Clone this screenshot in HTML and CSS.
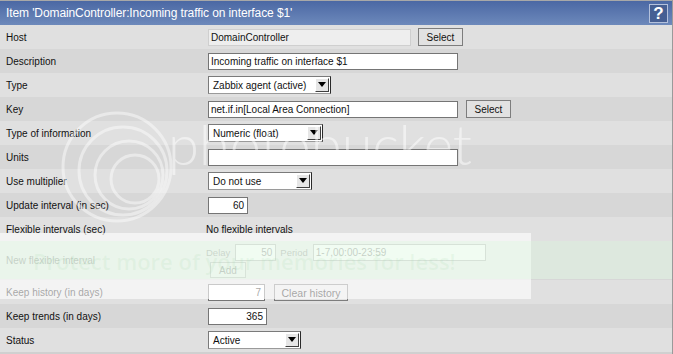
FILE: index.html
```html
<!DOCTYPE html>
<html>
<head>
<meta charset="utf-8">
<link rel="stylesheet" href="styles.css">
</head>
<body>
<div class="page">
  <div class="header">
    <span class="title">Item 'DomainController:Incoming traffic on interface $1'</span>
    <span class="help">?</span>
  </div>
  <div class="form">
    <div class="row light">
      <div class="label">Host</div>
      <div class="value">
        <span class="input readonly w-host">DomainController</span>
        <span class="btn b-select1">Select</span>
      </div>
    </div>
    <div class="row dark">
      <div class="label">Description</div>
      <div class="value"><span class="input w-wide">Incoming traffic on interface $1</span></div>
    </div>
    <div class="row light">
      <div class="label">Type</div>
      <div class="value"><span class="select w-type"><span class="sel-text">Zabbix agent (active)</span><span class="arrow"></span></span></div>
    </div>
    <div class="row dark">
      <div class="label">Key</div>
      <div class="value">
        <span class="input w-wide">net.if.in[Local Area Connection]</span>
        <span class="btn b-select2">Select</span>
      </div>
    </div>
    <div class="row light">
      <div class="label">Type of information</div>
      <div class="value"><span class="select w-info"><span class="sel-text">Numeric (float)</span><span class="arrow"></span></span></div>
    </div>
    <div class="row dark">
      <div class="label">Units</div>
      <div class="value"><span class="input w-wide"></span></div>
    </div>
    <div class="row light">
      <div class="label">Use multiplier</div>
      <div class="value"><span class="select w-mult"><span class="sel-text">Do not use</span><span class="arrow"></span></span></div>
    </div>
    <div class="row dark">
      <div class="label">Update interval (in sec)</div>
      <div class="value"><span class="input num w-upd">60</span></div>
    </div>
    <div class="row light">
      <div class="label">Flexible intervals (sec)</div>
      <div class="value text">No flexible intervals</div>
    </div>
    <div class="row dark tall">
      <div class="label">New flexible interval</div>
      <div class="value stack">
        <div class="flex-line">
          <span class="small">Delay</span>
          <span class="input num w-delay">50</span>
          <span class="small">Period</span>
          <span class="input w-period">1-7,00:00-23:59</span>
        </div>
        <span class="btn b-add">Add</span>
      </div>
    </div>
    <div class="row light">
      <div class="label">Keep history (in days)</div>
      <div class="value">
        <span class="input num w-hist">7</span>
        <span class="btn b-clear">Clear history</span>
      </div>
    </div>
    <div class="row dark">
      <div class="label">Keep trends (in days)</div>
      <div class="value"><span class="input num w-trend">365</span></div>
    </div>
    <div class="row light">
      <div class="label">Status</div>
      <div class="value"><span class="select w-status"><span class="sel-text">Active</span><span class="arrow"></span></span></div>
    </div>
  </div>

  <div class="wm-logo">
    <svg width="140" height="150" viewBox="0 0 140 150">
      <g fill="none" stroke="#ffffff" stroke-opacity="0.45" stroke-width="3">
        <circle cx="62" cy="72" r="54"/>
        <circle cx="68" cy="76" r="44"/>
        <circle cx="74" cy="80" r="34"/>
        <circle cx="80" cy="84" r="24"/>
      </g>
    </svg>
  </div>
  <div class="wm-text">photobucket</div>
  <div class="wm-veil"></div>
  <div class="wm-band"></div>
  <div class="wm-slogan">Protect more of your memories for less!</div>
</div>
</body>
</html>
```
FILE: styles.css
```css
html, body {
  margin: 0;
  padding: 0;
  background: #ffffff;
}
.page {
  position: relative;
  width: 672px;
  height: 354px;
  border-right: 1px solid #9a9a9a;
  background: #d0d0d0;
  overflow: hidden;
  font-family: "Liberation Sans", Arial, sans-serif;
  font-size: 10px;
  color: #111;
}
.header {
  height: 24px;
  border-top: 1px solid #a8a8a8;
  background: linear-gradient(#4b68a4, #6d89bb);
  display: flex;
  align-items: center;
  justify-content: space-between;
  padding: 0 4px 0 6px;
}
.title {
  color: #ffffff;
  font-size: 12px;
  letter-spacing: -0.1px;
}
.help {
  width: 17px;
  height: 17px;
  border: 1px solid #b4c1dc;
  background: #465f93;
  color: #ffffff;
  font-weight: bold;
  font-size: 17px;
  line-height: 18px;
  text-align: center;
}
.form {
  display: flex;
  flex-direction: column;
}
.row {
  height: 24px;
  display: flex;
  align-items: center;
}
.row.tall { height: 39px; }
.light { background: #e0e0e0; }
.dark { background: #d7d7d7; }
.label {
  width: 200px;
  padding-left: 6px;
  flex: none;
}
.value {
  display: flex;
  align-items: center;
}
.value.stack {
  flex-direction: column;
  align-items: flex-start;
  gap: 1px;
}
.flex-line {
  display: flex;
  align-items: flex-start;
}
.small {
  font-size: 9.5px;
  color: #333;
  padding-top: 3px;
}
.flex-line .small + .input { margin-left: 5px; }
.flex-line .input + .small { margin-left: 4px; }
.input {
  box-sizing: border-box;
  height: 17px;
  margin-left: 2px;
  border: 1px solid #757575;
  background: #ffffff;
  padding: 1px 2px 0 2px;
  line-height: 14px;
  white-space: nowrap;
  overflow: hidden;
}
.flex-line .input { margin-left: 0; }
.input.readonly {
  background: #eeeeee;
  border-color: #cfcfcf;
}
.input.num { text-align: right; padding-right: 3px; }
.w-host { width: 203px; }
.w-wide { width: 250px; }
.w-upd { width: 40px; }
.w-delay { width: 41px; }
.w-period { width: 173px; }
.w-hist { width: 57px; }
.w-trend { width: 59px; }
.btn {
  box-sizing: border-box;
  height: 18px;
  border: 1px solid #7d7d7d;
  background: #e2e2e2;
  text-align: center;
  line-height: 17px;
  white-space: nowrap;
}
.b-select1 { width: 45px; margin-left: 7px; }
.b-select2 { width: 45px; margin-left: 8px; }
.b-add { width: 36px; height: 16px; line-height: 16px; margin-left: 4px; }
.b-clear { width: 74px; margin-left: 9px; height: 17px; line-height: 16px; font-size: 10.5px; }
.select {
  box-sizing: border-box;
  height: 18px;
  margin-left: 2px;
  border: 1px solid #7a7a7a;
  border-right-color: #2a2a2a;
  border-bottom-color: #9a9a9a;
  background: #ffffff;
  display: flex;
  align-items: center;
  justify-content: space-between;
  padding: 0 1px 0 4px;
}
.w-type { width: 123px; }
.w-info { width: 115px; }
.w-mult { width: 104px; }
.w-status { width: 93px; }
.arrow {
  box-sizing: border-box;
  width: 14px;
  height: 14px;
  background: #e6e6e6;
  border-top: 1px solid #ffffff;
  border-left: 1px solid #ffffff;
  border-right: 1px solid #404040;
  border-bottom: 1px solid #404040;
  position: relative;
}
.arrow::after {
  content: "";
  position: absolute;
  left: 2px;
  top: 3px;
  border-left: 4px solid transparent;
  border-right: 4px solid transparent;
  border-top: 5px solid #000000;
}
.wm-logo {
  position: absolute;
  left: 55px;
  top: 95px;
}
.wm-text {
  position: absolute;
  left: 168px;
  top: 112px;
  font-family: Lato, "Open Sans", sans-serif;
  font-weight: 300;
  font-size: 56px;
  line-height: 64px;
  color: rgba(255, 255, 255, 0.5);
}
.wm-veil {
  position: absolute;
  left: 0;
  top: 233px;
  width: 531px;
  height: 66px;
  background: rgba(255, 255, 255, 0.62);
}
.wm-band {
  position: absolute;
  left: 0;
  top: 241px;
  width: 672px;
  height: 38px;
  background: rgba(228, 250, 230, 0.5);
}
.wm-slogan {
  position: absolute;
  left: 33px;
  top: 246px;
  font-family: "Open Sans", sans-serif;
  font-weight: 600;
  font-size: 22px;
  line-height: 30px;
  color: rgba(150, 210, 160, 0.13);
  white-space: nowrap;
}
```
